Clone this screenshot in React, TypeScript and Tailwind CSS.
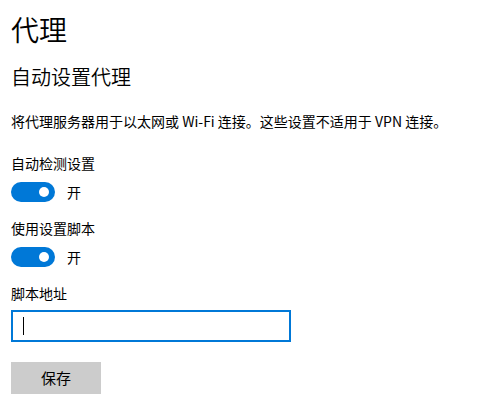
import React from "react";

const font = { fontFamily: '"Noto Sans CJK SC", "Noto Sans", sans-serif' };

function Toggle({ label }: { label: string }) {
  return (
    <div className="mt-[9px] flex h-[20px] items-center">
      <div className="relative h-[20px] w-[44px] rounded-full bg-[#0078d7]">
        <div className="absolute right-[6px] top-[5px] h-[10px] w-[10px] rounded-full bg-white" />
      </div>
      <span className="ml-[12px] text-[14px] leading-[20px] text-black">{label}</span>
    </div>
  );
}

export default function App() {
  return (
    <div className="min-h-[405px] w-[491px] bg-white pl-[11px] pt-[9px] text-black" style={font}>
      <h1 className="text-[28px] leading-[40px] font-[350]">代理</h1>
      <h2 className="mt-[14px] text-[20px] leading-[28px] font-[350]">自动设置代理</h2>
      <p className="mt-[20px] text-[14px] leading-[20px]">
        将代理服务器用于以太网或 Wi-Fi 连接。这些设置不适用于 VPN 连接。
      </p>

      <div className="mt-[22px] text-[14px] leading-[20px]">自动检测设置</div>
      <Toggle label="开" />

      <div className="mt-[16px] text-[14px] leading-[20px]">使用设置脚本</div>
      <Toggle label="开" />

      <div className="mt-[16px] text-[14px] leading-[20px]">脚本地址</div>
      <div className="mt-[7px] flex h-[32px] w-[280px] items-center border-2 border-[#0078d7] bg-white pl-[10px]">
        <div className="h-[18px] w-[1px] bg-black" />
      </div>

      <button className="mt-[20px] h-[32px] w-[90px] bg-[#cccccc] text-[15px] leading-[20px] text-black">
        保存
      </button>
    </div>
  );
}
